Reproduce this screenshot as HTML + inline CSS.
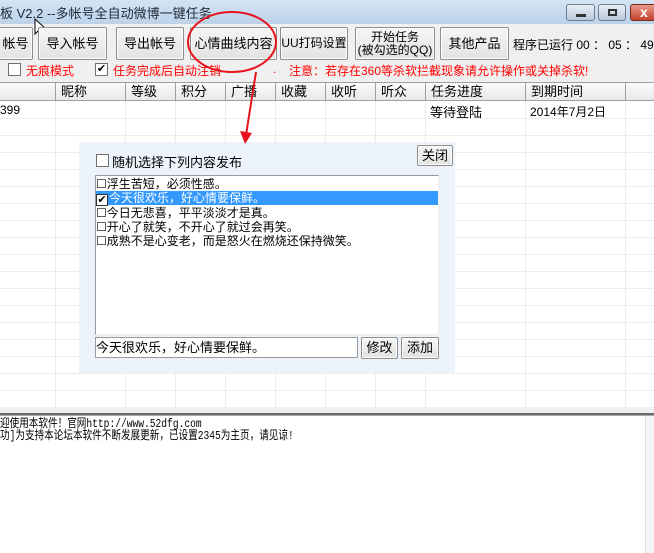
<!DOCTYPE html>
<html><head><meta charset="utf-8"><style>
*{margin:0;padding:0;box-sizing:border-box}
body{width:654px;height:553px;overflow:hidden;position:relative;background:#f0f0f0;font-family:"Liberation Sans","Noto Sans CJK SC","WenQuanYi Zen Hei",sans-serif;font-size:12px;color:#000}
.a{position:absolute;white-space:nowrap}
.btn{position:absolute;background:linear-gradient(#f6f6f6,#e2e2e2);border:1px solid #8e8e8e;border-radius:2px;text-align:center;font-size:13px;box-shadow:inset 0 0 0 1px #fcfcfc;white-space:nowrap;overflow:hidden}
.cb{position:absolute;width:13px;height:13px;border:1px solid #707070;background:#fff}
.red{color:#f00;font-size:12px}
.hd{position:absolute;top:83px;height:18px;background:linear-gradient(#fbfbfb,#e8e8e8);border-right:1px solid #a0a0a0;border-bottom:1px solid #a0a0a0;font-size:13px;padding-left:5px;line-height:17px;white-space:nowrap;overflow:hidden}
</style></head><body>
<div class="a" style="left:0;top:0;width:654px;height:24px;background:linear-gradient(#d5e4f3,#bcd2ea)"></div>
<div class="a" style="left:0;top:3px;font-size:13px;color:#1e2a3a">板 V2.2 --多帐号全自动微博一键任务</div>
<div class="a" style="left:566px;top:4px;width:29px;height:17px;border:1px solid #6d7d93;border-radius:3px;background:linear-gradient(#e9eff7,#b8c8dc)"><div class="a" style="left:9px;top:9px;width:10px;height:3px;background:#333"></div></div>
<div class="a" style="left:598px;top:4px;width:28px;height:17px;border:1px solid #6d7d93;border-radius:3px;background:linear-gradient(#e9eff7,#b8c8dc)"><div class="a" style="left:9px;top:4px;width:9px;height:7px;border:2px solid #333"></div></div>
<div class="a" style="left:630px;top:4px;width:26px;height:17px;border:1px solid #7a2a20;border-radius:3px;background:linear-gradient(#e99a88,#c2432c);color:#fff;font-weight:bold;font-size:14px;line-height:15px;padding-left:9px">x</div>
<svg class="a" style="left:34px;top:18px" width="14" height="20"><path d="M1 1 L1 16 L5 12 L8 18 L10 17 L7 11 L12 11 Z" fill="#fff" stroke="#000"/></svg>

<div class="btn" style="left:-10px;top:27px;width:43px;height:33px;line-height:31px;padding-left:8px">帐号</div>
<div class="btn" style="left:38px;top:27px;width:69px;height:33px;line-height:31px">导入帐号</div>
<div class="btn" style="left:116px;top:27px;width:68px;height:33px;line-height:31px">导出帐号</div>
<div class="btn" style="left:190px;top:27px;width:87px;height:33px;line-height:31px">心情曲线内容</div>
<div class="btn" style="left:280px;top:27px;width:68px;height:33px;line-height:31px;font-size:12px">UU打码设置</div>
<div class="btn" style="left:355px;top:27px;width:80px;height:33px;line-height:13px;padding-top:3px;font-size:12px">开始任务<br>(被勾选的QQ)</div>
<div class="btn" style="left:440px;top:27px;width:69px;height:33px;line-height:31px">其他产品</div>
<div class="a" style="left:513px;top:36px;font-size:12px">程序已运行 00 ： 05 ： 49</div>

<div class="cb" style="left:8px;top:63px"></div>
<div class="a red" style="left:26px;top:62px">无痕模式</div>
<div class="cb" style="left:95px;top:63px;font-size:11px;line-height:10px;text-align:center">✔</div>
<div class="a red" style="left:113px;top:62px">任务完成后自动注销</div>
<div class="a red" style="left:273px;top:62px">.</div>
<div class="a red" style="left:289px;top:62px">注意：若存在360等杀软拦截现象请允许操作或关掉杀软!</div>

<div class="a" style="left:0;top:82px;width:654px;height:325px;background:#fff;border-top:1px solid #a0a0a0"></div>
<svg class="a" style="left:0;top:101px" width="654" height="306">
<g stroke="#ececec"><path d="M55.5 0V306M125.5 0V306M175.5 0V306M225.5 0V306M275.5 0V306M325.5 0V306M375.5 0V306M425.5 0V306M525.5 0V306M625.5 0V306"/>
<path d="M0 17.5H654M0 34.5H654M0 51.5H654M0 68.5H654M0 85.5H654M0 102.5H654M0 119.5H654M0 136.5H654M0 153.5H654M0 170.5H654M0 187.5H654M0 204.5H654M0 221.5H654M0 238.5H654M0 255.5H654M0 272.5H654M0 289.5H654"/></g></svg>
<div class="hd" style="left:0;width:56px"></div>
<div class="hd" style="left:56px;width:70px">昵称</div>
<div class="hd" style="left:126px;width:50px">等级</div>
<div class="hd" style="left:176px;width:50px">积分</div>
<div class="hd" style="left:226px;width:50px">广播</div>
<div class="hd" style="left:276px;width:50px">收藏</div>
<div class="hd" style="left:326px;width:50px">收听</div>
<div class="hd" style="left:376px;width:50px">听众</div>
<div class="hd" style="left:426px;width:100px">任务进度</div>
<div class="hd" style="left:526px;width:100px">到期时间</div>
<div class="hd" style="left:626px;width:30px"></div>
<div class="a" style="left:0;top:103px">399</div>
<div class="a" style="left:430px;top:102px;font-size:13px">等待登陆</div>
<div class="a" style="left:530px;top:103px">2014年7月2日</div>

<div class="a" style="left:0;top:407px;width:654px;height:7px;background:#f0f0f0"></div>
<div class="a" style="left:0;top:413px;width:654px;height:3px;background:#6a6a6a;border-bottom:1px solid #aaa"></div>
<div class="a" style="left:0;top:416px;width:654px;height:137px;background:#fff"></div>
<div class="a" style="left:645px;top:416px;width:9px;height:137px;background:#f4f4f4;border-left:1px solid #ddd"></div>
<div class="a" style="left:0;top:418px;font-size:12px;line-height:12px;transform:scaleX(0.8);transform-origin:left top;font-family:'Liberation Mono','WenQuanYi Zen Hei',monospace">迎使用本软件！官网http://www.52dfg.com<br>功]为支持本论坛本软件不断发展更新，已设置2345为主页，请见谅!</div>

<div class="a" style="left:79px;top:142px;width:376px;height:231px;background:#ecf3fb"></div>
<div class="cb" style="left:96px;top:154px"></div>
<div class="a" style="left:112px;top:152px;font-size:13px">随机选择下列内容发布</div>
<div class="btn" style="left:417px;top:145px;width:36px;height:21px;line-height:19px">关闭</div>
<div class="a" style="left:95px;top:175px;width:344px;height:160px;background:#fff;border:1px solid #9a9a9a;border-right-color:#eee;border-bottom-color:#eee"></div>
<div class="a" style="left:96px;top:191px;width:342px;height:14px;background:#3399ff"></div>
<div class="a" style="left:96px;top:177px;font-size:12px;line-height:14px">☐浮生苦短，必须性感。<br><span style="color:#fff"><span style="display:inline-block;width:12px;height:12px;background:#fff;border:1px solid #333;color:#000;font-size:11px;line-height:10px;text-align:center;vertical-align:-1px;margin-right:1px">✔</span>今天很欢乐，好心情要保鲜。</span><br>☐今日无悲喜，平平淡淡才是真。<br>☐开心了就笑，不开心了就过会再笑。<br>☐成熟不是心变老，而是怒火在燃烧还保持微笑。</div>
<div class="a" style="left:95px;top:337px;width:263px;height:21px;background:#fff;border:1px solid #9a9a9a;font-size:13px;line-height:19px">今天很欢乐，好心情要保鲜。</div>
<div class="btn" style="left:361px;top:337px;width:37px;height:22px;line-height:20px">修改</div>
<div class="btn" style="left:401px;top:337px;width:38px;height:22px;line-height:20px">添加</div>

<svg class="a" style="left:0;top:0" width="654" height="553">
<ellipse cx="232" cy="42" rx="44" ry="30" fill="none" stroke="#e8141c" stroke-width="2"/>
<line x1="256" y1="72" x2="246" y2="135" stroke="#e8141c" stroke-width="2"/>
<path d="M240 131 L252 133 L245 144 Z" fill="#e8141c"/>
</svg>
</body></html>
